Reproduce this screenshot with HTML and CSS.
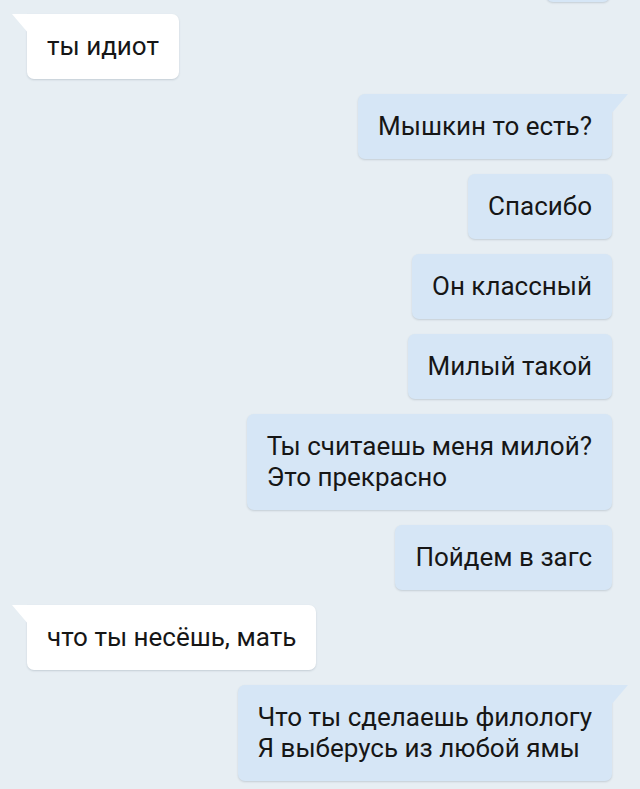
FILE: index.html
```html
<!DOCTYPE html>
<html lang="ru">
<head>
<meta charset="utf-8">
<link rel="stylesheet" href="styles.css">
</head>
<body>
<div class="chat">
  <div class="msg out partial">&nbsp;</div>
  <div class="msg in tail">ты идиот</div>
  <div class="msg out tail">Мышкин то есть?</div>
  <div class="msg out">Спасибо</div>
  <div class="msg out">Он классный</div>
  <div class="msg out">Милый такой</div>
  <div class="msg out">Ты считаешь меня милой?<br>Это прекрасно</div>
  <div class="msg out">Пойдем в загс</div>
  <div class="msg in tail">что ты несёшь, мать</div>
  <div class="msg out tail">Что ты сделаешь филологу<br>Я выберусь из любой ямы</div>
</div>
</body>
</html>
```
FILE: styles.css
```css
html, body {
  margin: 0;
  padding: 0;
  background: #e7eef3;
  height: 100%;
  overflow: hidden;
}
.chat {
  display: flex;
  flex-direction: column;
  gap: 15px;
  padding: 0 28px 0 27px;
  font-family: Roboto, "Noto Sans", sans-serif;
  font-size: 26px;
  line-height: 31px;
  color: #161616;
}
.msg {
  position: relative;
  padding: 17px 20px 17px 20px;
  border-radius: 7px;
  box-shadow: 0 1px 2px rgba(60, 80, 100, 0.2);
}
.in {
  align-self: flex-start;
  background: #ffffff;
}
.out {
  align-self: flex-end;
  background: #d6e6f6;
}
.partial {
  width: 24px;
  margin-top: -63px;
  margin-bottom: -3px;
  margin-right: 2px;
}
.in.tail { border-top-left-radius: 0; }
.out.tail { border-top-right-radius: 0; }
.tail::before {
  content: "";
  position: absolute;
  top: 0;
  width: 17px;
  height: 20px;
}
.in.tail::before {
  left: -15px;
  background: #ffffff;
  clip-path: polygon(0 0, 100% 0, 100% 100%);
}
.out.tail::before {
  right: -16px;
  background: #d6e6f6;
  clip-path: polygon(0 0, 100% 0, 0 100%);
}
```
